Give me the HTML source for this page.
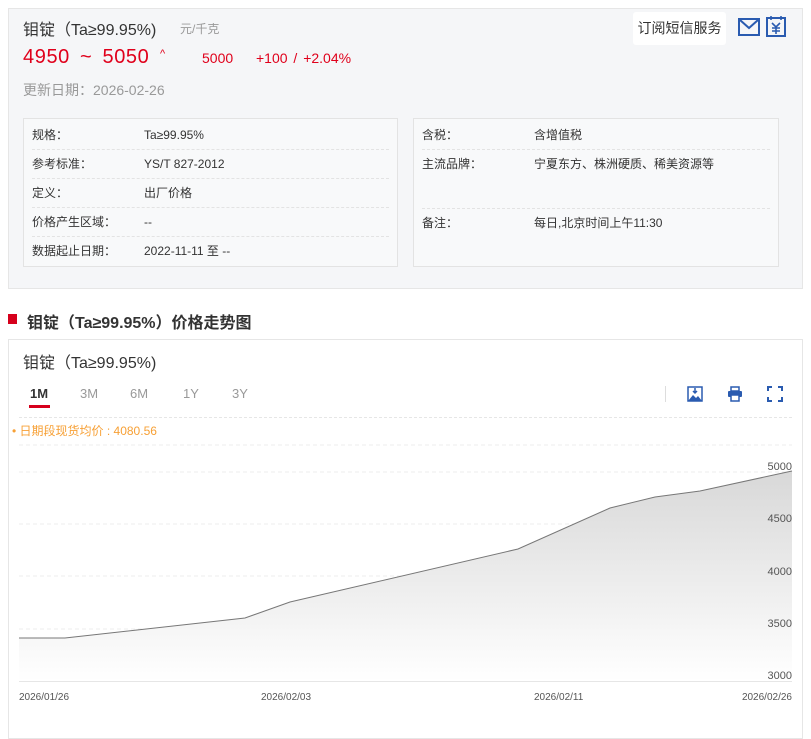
<!DOCTYPE html>
<html><head><meta charset="utf-8"><style>
*{margin:0;padding:0;box-sizing:border-box}
body{width:811px;height:736px;background:#fff;font-family:"Liberation Sans","Noto Sans CJK SC",sans-serif;position:relative;overflow:hidden;color:#333}
.abs{position:absolute;white-space:nowrap}
.card{position:absolute;left:8px;top:8px;width:795px;height:281px;background:#f5f6f8;border:1px solid #e6e6e6}
.box{position:absolute;top:118px;height:149px;background:#f8f9fa;border:1px solid #e3e3e3}
.row{position:absolute;left:8px;right:8px;height:29px;border-bottom:1px dashed #e3e3e3;font-size:12px;line-height:29px;color:#333}
.row span{position:absolute;left:112px}
.row.nb{border:none}
</style></head><body>
<div class="card"></div>
<div class="abs" style="left:23px;top:16px;font-size:16px;color:#333">钼锭（Ta≥99.95%)</div>
<div class="abs" style="left:180px;top:20px;font-size:12px;color:#999">元/千克</div>
<div class="abs" style="left:23px;top:46px;font-size:20px;color:#e0001b;letter-spacing:0.6px;word-spacing:4px">4950 ~ 5050</div>
<div class="abs" style="left:160px;top:48px;font-size:11px;color:#e0001b">^</div>
<div class="abs" style="left:202px;top:50px;font-size:14px;color:#e0001b">5000</div>
<div class="abs" style="left:256px;top:50px;font-size:14px;color:#e0001b;word-spacing:2px">+100 / +2.04%</div>
<div class="abs" style="left:23px;top:80px;font-size:14px;color:#999">更新日期：2026-02-26</div>
<div class="abs" style="left:633px;top:12px;width:93px;height:33px;background:#fff;border-radius:3px;font-size:14px;line-height:33px;text-align:center;color:#333">订阅短信服务</div>
<svg class="abs" style="left:738px;top:18px" width="22" height="18" viewBox="0 0 22 18"><rect x="1" y="1" width="20" height="16" fill="none" stroke="#2a5bb0" stroke-width="2"/><path d="M2 2 L11 10 L20 2" fill="none" stroke="#2a5bb0" stroke-width="2"/></svg>
<svg class="abs" style="left:766px;top:15px" width="20" height="22" viewBox="0 0 20 22"><rect x="1" y="3" width="18" height="18" fill="none" stroke="#2a5bb0" stroke-width="2"/><path d="M5 1v4M15 1v4M6 8l4 4 4-4M10 12v7M6 13h8M6 16h8" fill="none" stroke="#2a5bb0" stroke-width="1.6"/></svg>

<div class="box" style="left:23px;width:375px">
<div class="row" style="top:2px">规格：<span>Ta≥99.95%</span></div>
<div class="row" style="top:31px">参考标准：<span>YS/T 827-2012</span></div>
<div class="row" style="top:60px">定义：<span>出厂价格</span></div>
<div class="row" style="top:89px">价格产生区域：<span>--</span></div>
<div class="row nb" style="top:118px">数据起止日期：<span>2022-11-11 至 --</span></div>
</div>
<div class="box" style="left:413px;width:366px">
<div class="row" style="top:2px">含税：<span>含增值税</span></div>
<div class="row" style="top:31px;height:59px;line-height:29px">主流品牌：<span>宁夏东方、株洲硬质、稀美资源等</span></div>
<div class="row nb" style="top:90px">备注：<span>每日,北京时间上午11:30</span></div>
</div>

<div class="abs" style="left:8px;top:314px;width:9px;height:10px;background:#d6001c"></div>
<div class="abs" style="left:27px;top:309px;font-size:16px;font-weight:bold;color:#333">钼锭（Ta≥99.95%）价格走势图</div>
<div class="abs" style="left:8px;top:339px;width:795px;height:400px;border:1px solid #e6e6e6"></div>
<div class="abs" style="left:23px;top:349px;font-size:16px;color:#333">钼锭（Ta≥99.95%)</div>
<div class="abs" style="left:30px;top:386px;font-size:13px;color:#333;font-weight:bold">1M</div>
<div class="abs" style="left:29px;top:405px;width:21px;height:3px;background:#d6001c"></div>
<div class="abs" style="left:80px;top:386px;font-size:13px;color:#999">3M</div>
<div class="abs" style="left:130px;top:386px;font-size:13px;color:#999">6M</div>
<div class="abs" style="left:183px;top:386px;font-size:13px;color:#999">1Y</div>
<div class="abs" style="left:232px;top:386px;font-size:13px;color:#999">3Y</div>
<div class="abs" style="left:665px;top:386px;width:1px;height:16px;background:#ddd"></div>
<svg class="abs" style="left:687px;top:386px" width="16" height="16" viewBox="0 0 16 16"><rect x="1" y="1" width="14" height="14" fill="none" stroke="#2a5bb0" stroke-width="1.5"/><path d="M1 15 L6 9 L9 12 L11 10 L15 15Z" fill="#2a5bb0"/><path d="M8 2v5M6 5l2 2 2-2" stroke="#2a5bb0" fill="none" stroke-width="1.5"/></svg>
<svg class="abs" style="left:727px;top:386px" width="16" height="16" viewBox="0 0 16 16"><rect x="4" y="1" width="8" height="4" fill="none" stroke="#2a5bb0" stroke-width="1.5"/><rect x="1" y="5" width="14" height="6" rx="1" fill="#2a5bb0"/><rect x="4" y="9" width="8" height="6" fill="#fff" stroke="#2a5bb0" stroke-width="1.5"/></svg>
<svg class="abs" style="left:767px;top:386px" width="16" height="16" viewBox="0 0 16 16"><path d="M1 5V1h4M11 1h4v4M15 11v4h-4M5 15H1v-4" fill="none" stroke="#2a5bb0" stroke-width="2"/></svg>
<div class="abs" style="left:19px;top:417px;width:773px;border-top:1px dashed #e6e6e6"></div>
<div class="abs" style="left:12px;top:422px;font-size:12px;color:#f7a035">• 日期段现货均价 : 4080.56</div>

<svg class="abs" style="left:0;top:430px" width="811" height="280" viewBox="0 430 811 280">
<defs><linearGradient id="g" x1="0" y1="0" x2="0" y2="1"><stop offset="0" stop-color="#d8d8d8"/><stop offset="1" stop-color="#fff"/></linearGradient></defs>
<g stroke="#eee" stroke-dasharray="4 3"><line x1="19" x2="792" y1="472" y2="472"/><line x1="19" x2="792" y1="524" y2="524"/><line x1="19" x2="792" y1="576" y2="576"/><line x1="19" x2="792" y1="629" y2="629"/><line x1="19" x2="792" y1="445" y2="445"/></g>
<path d="M19 638 L65 638 L245 618 L290 602 L518 549 L610 508 L655 497 L700 491 L792 471 L792 681 L19 681Z" fill="url(#g)"/>
<path d="M19 638 L65 638 L245 618 L290 602 L518 549 L610 508 L655 497 L700 491 L792 471" fill="none" stroke="#777" stroke-width="1"/>
<line x1="19" x2="792" y1="681.5" y2="681.5" stroke="#e6e6e6"/>
<g font-size="11" fill="#555" font-family="Liberation Sans,sans-serif" text-anchor="end"><text x="792" y="470">5000</text><text x="792" y="522">4500</text><text x="792" y="575">4000</text><text x="792" y="627">3500</text><text x="792" y="679">3000</text></g>
<g font-size="10" fill="#555" font-family="Liberation Sans,sans-serif"><text x="19" y="700">2026/01/26</text><text x="261" y="700">2026/02/03</text><text x="534" y="700">2026/02/11</text><text x="792" y="700" text-anchor="end">2026/02/26</text></g>
</svg>
</body></html>
